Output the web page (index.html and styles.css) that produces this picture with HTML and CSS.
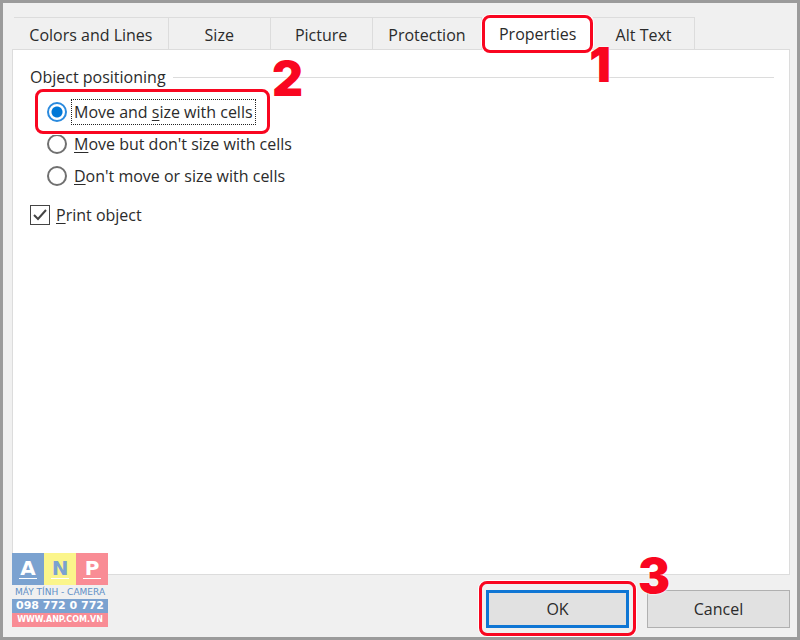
FILE: index.html
```html
<!DOCTYPE html>
<html lang="en">
<head>
    <meta charset="UTF-8">
    <meta name="viewport" content="width=device-width, initial-scale=1.0">
    <title>Format Picture</title>
    <link rel="stylesheet" href="styles.css">
</head>
<body>
    <form class="dialog">
        <div class="tabs" role="tablist">
            <button type="button" class="tab tab-wide" role="tab">Colors and Lines</button>
            <button type="button" class="tab" role="tab">Size</button>
            <button type="button" class="tab" role="tab">Picture</button>
            <button type="button" class="tab tab-mid" role="tab">Protection</button>
            <button type="button" class="tab tab-active" role="tab" aria-selected="true">Properties<span class="step step-1">1</span></button>
            <button type="button" class="tab" role="tab">Alt Text</button>
        </div>

        <div class="panel" role="tabpanel">
            <div class="group-title"><span>Object positioning</span></div>

            <div class="options">
                <div class="option">
                    <input type="radio" name="position" id="moveSize" checked>
                    <label for="moveSize" class="focused">Move and <u>s</u>ize with cells</label>
                    <span class="frame"></span>
                    <span class="step step-2">2</span>
                </div>
                <div class="option">
                    <input type="radio" name="position" id="moveOnly">
                    <label for="moveOnly"><u>M</u>ove but don't size with cells</label>
                </div>
                <div class="option">
                    <input type="radio" name="position" id="noMove">
                    <label for="noMove"><u>D</u>on't move or size with cells</label>
                </div>
            </div>

            <div class="print">
                <span class="check">
                    <input type="checkbox" id="print" checked>
                    <svg width="20" height="20" viewBox="0 0 20 20"><path d="M4 10l4 4 8-9" fill="none" stroke="#444" stroke-width="2"/></svg>
                </span>
                <label for="print"><u>P</u>rint object</label>
            </div>
        </div>

        <div class="buttons">
            <div class="ok-wrap">
                <button type="submit" class="btn btn-ok">OK</button>
                <span class="frame"></span>
                <span class="step step-3">3</span>
            </div>
            <button type="button" class="btn">Cancel</button>
        </div>

        <div class="logo">
            <div class="logo-letters">
                <span class="blue">A</span>
                <span class="yellow">N</span>
                <span class="pink">P</span>
            </div>
            <div class="logo-name">MÁY TÍNH - CAMERA</div>
            <div class="logo-phone blue">098 772 0 772</div>
            <div class="logo-site pink">WWW.ANP.COM.VN</div>
        </div>
    </form>
</body>
</html>
```
FILE: styles.css
```css
* {
    box-sizing: border-box;
    margin: 0;
    padding: 0;
}
body, button {
    font-family: "Open Sans", "Noto Sans", sans-serif;
    font-size: 16px;
    line-height: 24px;
    color: #2b2b2b;
}
.dialog {
    position: relative;
    display: flex;
    flex-direction: column;
    min-height: 100vh;
    padding: 14px 7px 9px 9px;
    background: #f0f0f0;
    border: 3px solid #9b9b9b;
}

/* tabs */
.tabs {
    display: flex;
    margin-left: 2px;
    margin-right: 95px;
}
.tab {
    position: relative;
    flex: 103 1 0;
    height: 32px;
    padding-top: 3px;
    white-space: nowrap;
    background: #f0f0f0;
    border: solid #dcdcdc;
    border-width: 1px 1px 0 0;
}
.tab-wide {
    flex-grow: 157;
}
.tab-mid {
    flex-grow: 111;
}
.tab-active {
    flex-grow: 107;
    height: 38px;
    margin: -2px 0 -4px;
    padding: 0;
    z-index: 1;
    background: #fff;
    border: 3px solid #f90620;
    border-radius: 8px;
    box-shadow: 0 0 0 1px #fff;
}

/* panel */
.panel {
    flex: 1;
    padding: 15px 15px 15px 17px;
    background: #fff;
    border: 1px solid #dcdcdc;
}
.group-title {
    display: flex;
    align-items: center;
    gap: 7px;
}
.group-title::after {
    content: "";
    flex: 1;
    height: 1px;
    background: #dcdcdc;
}
.options {
    margin: 7px 0 7px 17px;
}
.option, .print {
    position: relative;
    display: flex;
    align-items: center;
    width: max-content;
    height: 32px;
}
.option {
    gap: 4px;
}
.option label {
    padding: 0 2px;
    border: 1px dotted transparent;
}
.option .focused {
    border-color: #222;
}
input[type="radio"] {
    appearance: none;
    width: 20px;
    height: 20px;
    background: #fff;
    border: 2px solid #707070;
    border-radius: 50%;
}
input[type="radio"]:checked {
    background: radial-gradient(#0078d7 5px, #fff 6px);
    border-color: #2a8ade;
}
.print {
    gap: 6px;
}
.check {
    position: relative;
    height: 20px;
}
.check input {
    appearance: none;
    display: block;
    width: 20px;
    height: 20px;
    border: 1px solid #444;
}
.check svg {
    position: absolute;
    left: 0;
    top: 0;
    pointer-events: none;
}
u {
    text-underline-offset: 2px;
}

/* bottom buttons */
.buttons {
    display: flex;
    justify-content: flex-end;
    gap: 18px;
    margin-top: 15px;
}
.ok-wrap {
    position: relative;
}
.btn {
    width: 143px;
    height: 38px;
    background: #e1e1e1;
    border: 1px solid #b0b0b0;
}
.btn-ok {
    border: 3px solid #0f76d4;
}

/* red marks */
.frame {
    position: absolute;
    inset: -9px -7px -8px;
    z-index: 1;
    border: 3px solid #f90620;
    border-radius: 8px;
    box-shadow: 0 0 0 1px #fff;
    pointer-events: none;
}
.option .frame {
    inset: -7px -14px -6px -12px;
}
.step {
    position: absolute;
    z-index: 2;
    font-family: Inter, "Liberation Sans", sans-serif;
    font-size: 48px;
    font-weight: 900;
    line-height: 48px;
    color: #f90620;
    text-shadow: 0 0 2px #fff, 0 0 2px #fff;
    pointer-events: none;
}
.step-1 {
    left: 104px;
    top: 23px;
}
.step-2 {
    left: 225px;
    top: -41px;
}
.step-3 {
    left: 152px;
    top: -38px;
}

/* watermark */
.logo {
    position: absolute;
    left: 9px;
    bottom: 10px;
    width: 96px;
    font-family: "DejaVu Sans", sans-serif;
    text-align: center;
    white-space: nowrap;
    color: #fff;
}
.blue {
    background: #7ba2d0;
}
.yellow {
    background: #fbf58b;
}
.pink {
    background: #f98c95;
}
.logo-letters {
    display: flex;
}
.logo-letters span {
    flex: 1;
    height: 32px;
    font-size: 20px;
    font-weight: bold;
    line-height: 30px;
}
.logo-letters .yellow {
    color: #7ba2d0;
}
.logo-letters span::after {
    content: "";
    display: block;
    width: 18px;
    height: 1px;
    margin: -5px auto 0;
    background: #fff;
}
.logo-name {
    font-size: 9px;
    line-height: 14px;
    color: #5f8fc6;
}
.logo-phone {
    font-size: 11px;
    font-weight: bold;
    line-height: 14px;
}
.logo-site {
    font-size: 8px;
    font-weight: bold;
    line-height: 14px;
}
```
